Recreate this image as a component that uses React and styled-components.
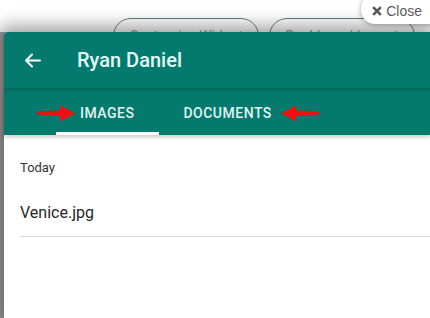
import React from "react";
import styled, { createGlobalStyle } from "styled-components";

const GlobalStyle = createGlobalStyle`
  html, body {
    margin: 0;
    padding: 0;
    background: #ffffff;
    font-family: Roboto, "Liberation Sans", Arial, sans-serif;
  }
`;

const Page = styled.div`
  position: relative;
  width: 430px;
  height: 318px;
  overflow: hidden;
  display: flex;
  flex-direction: column;
  background: #ffffff;
`;

const TopBar = styled.div`
  height: 32px;
  flex-shrink: 0;
  display: flex;
  align-items: flex-start;
  gap: 10px;
  padding: 18px 0 0 113px;
  box-sizing: border-box;
`;

const Pill = styled.div`
  flex-shrink: 0;
  width: 146px;
  height: 36px;
  box-sizing: border-box;
  border: 1px solid #5f7f7a;
  border-radius: 18px;
  display: flex;
  align-items: center;
  justify-content: center;
  font-size: 14px;
  color: #9aa5a3;
`;

const CloseButton = styled.button`
  position: absolute;
  top: -6px;
  right: -14px;
  z-index: 3;
  height: 30px;
  padding: 3px 22px 0 11px;
  display: flex;
  align-items: center;
  gap: 4px;
  border: none;
  border-radius: 14px;
  background: #ffffff;
  box-shadow: 0 1px 5px rgba(0, 0, 0, 0.35);
  font-family: "Liberation Sans", Arial, sans-serif;
  font-size: 14px;
  color: #5a5a5a;
`;

const Stage = styled.div`
  flex: 1;
  display: flex;
  padding-left: 4px;
  background: #a2a2a2;
`;

const Panel = styled.div`
  position: relative;
  z-index: 2;
  flex: 1;
  display: flex;
  flex-direction: column;
  background: #ffffff;
  border-radius: 4px 0 0 0;
  box-shadow: 0 0 18px 6px rgba(0, 0, 0, 0.38);
`;

const Header = styled.div`
  position: relative;
  z-index: 1;
  height: 56px;
  display: flex;
  align-items: center;
  padding-left: 20px;
  background: #037a6d;
  border-radius: 4px 0 0 0;
  box-shadow: 0 2px 3px rgba(0, 0, 0, 0.18);
`;

const Title = styled.h1`
  margin: 0 0 0 36px;
  font-size: 20px;
  font-weight: 500;
  color: #e4faf6;
`;

const TabBar = styled.div`
  position: relative;
  height: 47px;
  display: flex;
  padding-left: 52px;
  background: #037a6d;
  box-shadow: 0 2px 4px rgba(0, 0, 0, 0.22);
`;

const Tab = styled.div`
  position: relative;
  display: flex;
  align-items: center;
  padding: 2px 25px 0 24px;
  font-size: 14px;
  font-weight: 500;
  letter-spacing: 0.5px;
  color: #e0f4f1;
  &::after {
    content: "";
    position: absolute;
    left: 0;
    right: 0;
    bottom: 0;
    height: 3px;
    background: ${(p) => (p.$active ? "#ffffff" : "transparent")};
  }
`;

const Marker = styled.svg`
  position: absolute;
  top: 17px;
  left: ${(p) => p.$left}px;
`;

const Content = styled.div`
  padding: 25px 0 0 16px;
`;

const GroupLabel = styled.div`
  font-size: 13px;
  line-height: 15px;
  color: #333333;
  margin-bottom: 28px;
`;

const FileRow = styled.div`
  line-height: 19px;
  padding-bottom: 14px;
  border-bottom: 1px solid #dcdcdc;
  font-size: 16px;
  color: #262626;
`;

const BackArrow = () => (
  <svg width="17" height="15" viewBox="0 0 17 15" fill="none">
    <path
      d="M16 7.5H2 M8 1.5L2 7.5L8 13.5"
      stroke="#ffffff"
      strokeWidth="2"
      strokeLinecap="round"
      strokeLinejoin="round"
    />
  </svg>
);

const CloseGlyph = () => (
  <svg width="10" height="10" viewBox="0 0 10 10">
    <path d="M1.2 1.2L8.8 8.8M8.8 1.2L1.2 8.8" stroke="#555" strokeWidth="2.6" />
  </svg>
);

const RedArrow = ({ left, flip }) => (
  <Marker
    $left={left}
    width="40"
    height="17"
    viewBox="0 0 40 17"
    style={flip ? { transform: "scaleX(-1)" } : undefined}
  >
    <path d="M1 6.5L24 5.5L24 0.5L39 8.5L24 16.5L24 11L1 9.5Z" fill="#f01010" />
  </Marker>
);

const App = () => (
  <>
    <GlobalStyle />
    <Page>
      <TopBar>
        <Pill>Customize Widget</Pill>
        <Pill>Dashboard Layout</Pill>
      </TopBar>
      <CloseButton>
        <CloseGlyph />
        Close
      </CloseButton>
      <Stage>
        <Panel>
          <Header>
            <BackArrow />
            <Title>Ryan Daniel</Title>
          </Header>
          <TabBar>
            <Tab $active>IMAGES</Tab>
            <Tab>DOCUMENTS</Tab>
            <RedArrow left={32} />
            <RedArrow left={276} flip />
          </TabBar>
          <Content>
            <GroupLabel>Today</GroupLabel>
            <FileRow>Venice.jpg</FileRow>
          </Content>
        </Panel>
      </Stage>
    </Page>
  </>
);

export default App;
